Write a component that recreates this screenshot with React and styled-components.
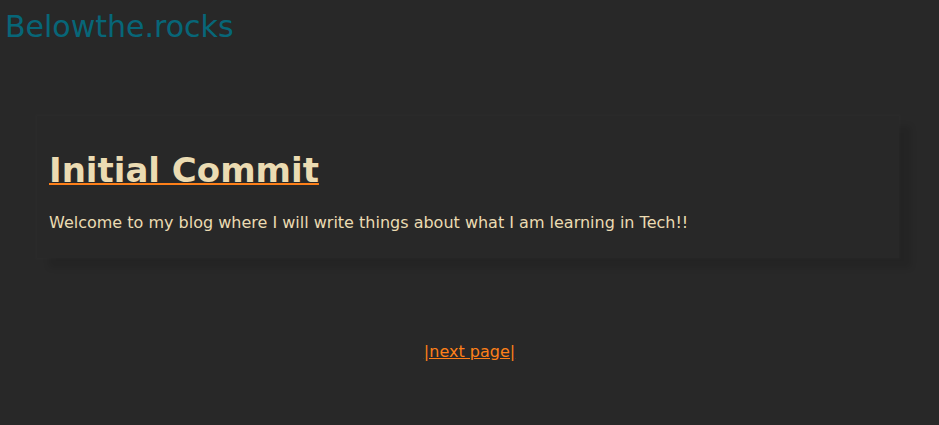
import styled, { createGlobalStyle } from "styled-components";

const GlobalStyle = createGlobalStyle`
  body {
    margin: 0;
    background: #282828;
    font-family: "DejaVu Sans", "Liberation Sans", sans-serif;
  }
`;

const Header = styled.header`
  padding: 9px 5px 0;
`;

const SiteTitle = styled.a`
  font-size: 30px;
  line-height: 35px;
  color: #076678;
  text-decoration: none;
`;

const Post = styled.article`
  width: 862px;
  margin: 72px 0 0 37px;
  padding: 6px 12px 10px;
  box-sizing: border-box;
  background: #282828;
  box-shadow: 0 0 3px 2px rgba(255, 255, 255, 0.015),
    12px 10px 6px rgba(0, 0, 0, 0.1);
`;

const PostTitle = styled.h2`
  margin: 28px 0 23px;
  font-size: 34px;
  line-height: 40px;

  a {
    color: #ebdbb2;
    text-decoration: underline;
    text-decoration-color: #fe8019;
    text-decoration-thickness: 2px;
  }
`;

const PostBody = styled.p`
  margin: 0 0 16px;
  font-size: 16px;
  line-height: 19px;
  color: #ebdbb2;
`;

const Pager = styled.nav`
  margin-top: 84px;
  text-align: center;
  font-size: 16px;
  line-height: 19px;

  a {
    color: #fe8019;
  }
`;

export default function App() {
  return (
    <>
      <GlobalStyle />
      <Header>
        <SiteTitle href="#">Belowthe.rocks</SiteTitle>
      </Header>
      <Post>
        <PostTitle>
          <a href="#">Initial Commit</a>
        </PostTitle>
        <PostBody>
          Welcome to my blog where I will write things about what I am learning in Tech!!
        </PostBody>
      </Post>
      <Pager>
        <a href="#">|next page|</a>
      </Pager>
    </>
  );
}
